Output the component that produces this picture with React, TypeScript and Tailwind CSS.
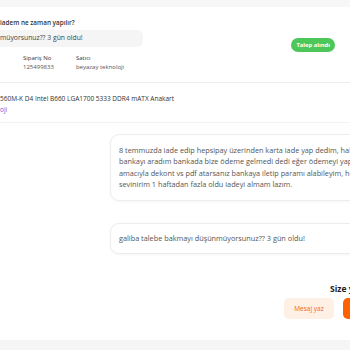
import React from "react";

const font = { fontFamily: '"Open Sans", "Noto Sans", sans-serif' };

export default function App() {
  return (
    <div
      className="w-[350px] h-[350px] overflow-hidden bg-white flex flex-col text-[#484848]"
      style={font}
    >
      <div className="h-[7px] shrink-0 bg-[#f7f7f7]" />

      {/* request header */}
      <div className="flex items-start justify-between pr-[15px] pt-[11px] h-[75px] shrink-0">
        <div className="flex flex-col">
          <p className="text-[6.4px] font-semibold leading-[9px] text-[#333]">iadem ne zaman yapılır?</p>
          <div className="mt-[3px] w-[143px] h-[17px] rounded-r-[6px] bg-[#f5f5f5] flex items-center">
            <span className="text-[6.8px] text-[#444]">müyorsunuz?? 3 gün oldu!</span>
          </div>
          <div className="flex gap-[22px] pl-[23px] mt-[7px] text-[6px] leading-[9px]">
            <div>
              <p className="text-[#333]">Sipariş No</p>
              <p className="text-[#555]">125499833</p>
            </div>
            <div>
              <p className="text-[#333]">Satıcı</p>
              <p className="text-[#555]">beyazay teknoloji</p>
            </div>
          </div>
        </div>
        <span className="mt-[20px] h-[14px] px-[5px] rounded-full bg-[#4cc85b] text-white text-[5.8px] font-bold flex items-center">
          Talep alındı
        </span>
      </div>

      <div className="h-px shrink-0 bg-[#ececec]" />

      {/* product */}
      <div className="h-[39px] shrink-0 pt-[10px] text-[6.5px] leading-[11px]">
        <p className="text-[#333]">560M-K D4 Intel B660 LGA1700 5333 DDR4 mATX Anakart</p>
        <p className="text-[#6b5bd6]">oji</p>
      </div>

      <div className="h-px shrink-0 bg-[#f3f3f3]" />

      {/* messages */}
      <div className="flex flex-col pl-[110px] pt-[11px] gap-[22px] shrink-0">
        <div className="w-[300px] rounded-[9px] border border-[#ededed] shadow-[0_1px_3px_rgba(0,0,0,0.04)] px-[8px] py-[10px] text-[7.3px] leading-[11.3px] text-[#555] whitespace-nowrap">
          <p>8 temmuzda iade edip hepsipay üzerinden karta iade yap dedim, halen</p>
          <p>bankayı aradım bankada bize ödeme gelmedi dedi eğer ödemeyi yaptıysanız</p>
          <p>amacıyla dekont vs pdf atarsanız bankaya iletip paramı alabileyim, hoş</p>
          <p>sevinirim 1 haftadan fazla oldu iadeyi almam lazım.</p>
        </div>
        <div className="w-[300px] h-[31px] rounded-[9px] border border-[#ededed] shadow-[0_1px_3px_rgba(0,0,0,0.04)] px-[8px] flex items-center text-[7.3px] text-[#555] whitespace-nowrap">
          galiba talebe bakmayı düşünmüyorsunuz?? 3 gün oldu!
        </div>
      </div>

      {/* reply */}
      <div className="flex-1 flex flex-col items-start pl-[284px] pt-[29px]">
        <p className="ml-[46px] text-[8.5px] font-bold text-[#222] whitespace-nowrap">Size yardımcı olabilir miyiz?</p>
        <div className="flex gap-[9px] mt-[2px]">
          <span className="w-[50px] h-[21px] rounded-[5px] bg-[#fff0e6] text-[#f2651c] text-[6.5px] flex items-center justify-center shrink-0">
            Mesaj yaz
          </span>
          <span className="w-[60px] h-[21px] rounded-[5px] bg-[#ff6000] text-white text-[6.5px] flex items-center justify-center shrink-0">
            Ara
          </span>
        </div>
      </div>

      <div className="h-[10px] shrink-0 bg-[#f5f5f5]" />
    </div>
  );
}
